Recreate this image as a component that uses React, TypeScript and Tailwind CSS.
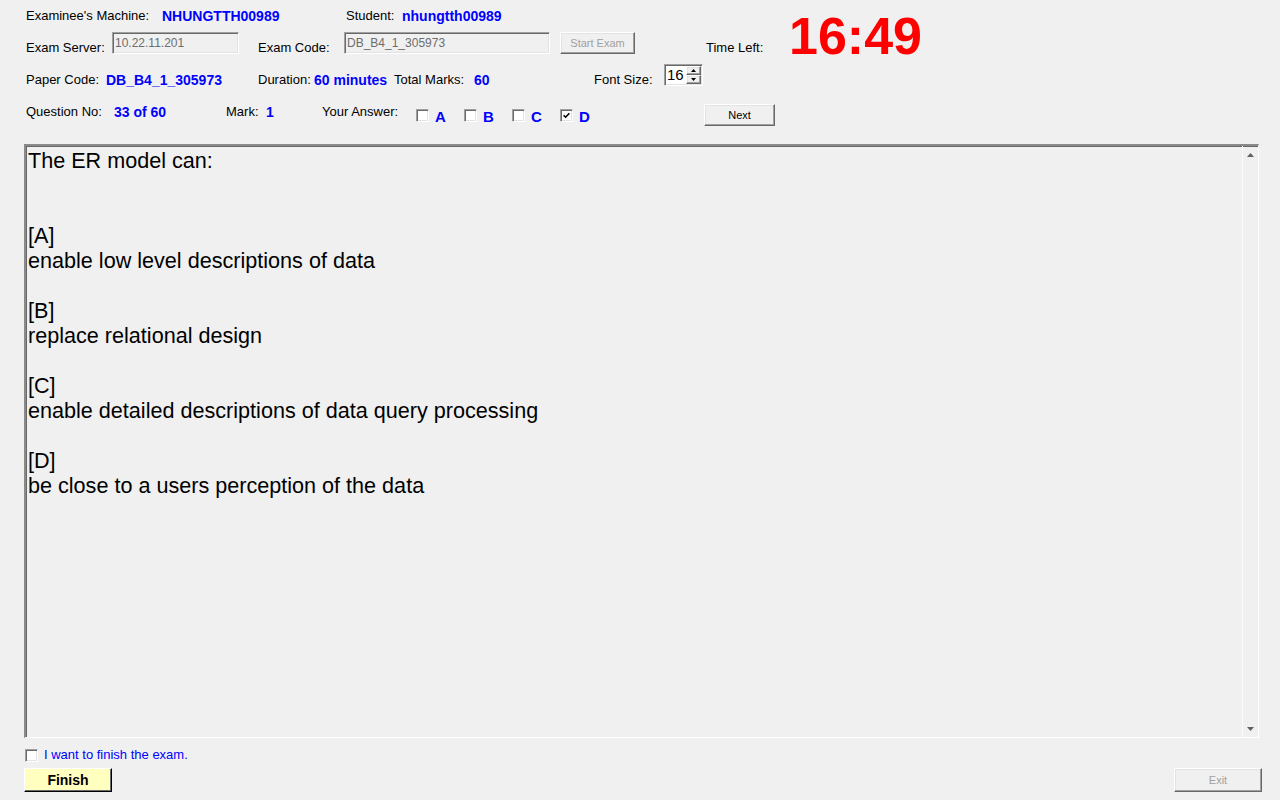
import React from "react";

const sunken =
  "border border-t-[#a0a0a0] border-l-[#a0a0a0] border-r-white border-b-white shadow-[inset_1px_1px_0_#696969,inset_-1px_-1px_0_#e3e3e3]";
const raised =
  "border border-t-white border-l-white border-r-[#696969] border-b-[#696969] shadow-[inset_-1px_-1px_0_#a0a0a0,inset_1px_1px_0_#e3e3e3]";

const questionText = `The ER model can:


[A]
enable low level descriptions of data

[B]
replace relational design

[C]
enable detailed descriptions of data query processing

[D]
be close to a users perception of the data`;

function CheckBox({ checked = false }: { checked?: boolean }) {
  return (
    <span className={`w-[13px] h-[13px] shrink-0 bg-white flex items-center justify-center ${sunken}`}>
      {checked && (
        <svg width="7" height="7" viewBox="0 0 7 7">
          <path d="M0.6 3.2 L2.6 5.2 L6.4 1.2" fill="none" stroke="#000" strokeWidth="1.6" />
        </svg>
      )}
    </span>
  );
}

function Arrow({ up }: { up?: boolean }) {
  return (
    <svg width="7" height="4" viewBox="0 0 7 4">
      <path d={up ? "M0 4 L3.5 0 L7 4 Z" : "M0 0 L7 0 L3.5 4 Z"} fill="#606060" />
    </svg>
  );
}

export default function App() {
  return (
    <div className="w-[1280px] h-[800px] bg-[#f0f0f0] flex flex-col overflow-hidden font-['Liberation_Sans',Arial,sans-serif] text-[13px] leading-[16px] text-black">
      {/* top rows + timer */}
      <div className="flex h-[56px] pl-[26px]">
        <div className="flex flex-col w-[763px]">
          <div className="flex h-[32px] pt-[8px]">
            <span className="w-[136px]">Examinee's Machine:</span>
            <span className="w-[184px] text-[14px] font-bold text-[#0000ff]">NHUNGTTH00989</span>
            <span className="w-[56px]">Student:</span>
            <span className="text-[14px] font-bold text-[#0000ff]">nhungtth00989</span>
          </div>
          <div className="flex h-[24px] items-start">
            <span className="w-[86px] mt-[8px]">Exam Server:</span>
            <div className={`w-[127px] h-[22px] pl-[2px] pt-[2px] text-[12px] text-[#6d6d6d] ${sunken}`}>10.22.11.201</div>
            <span className="w-[86px] ml-[19px] mt-[8px]">Exam Code:</span>
            <div className={`w-[206px] h-[22px] pl-[2px] pt-[2px] text-[12px] text-[#6d6d6d] ${sunken}`}>DB_B4_1_305973</div>
            <button className={`w-[75px] h-[22px] ml-[10px] text-[11px] text-[#a0a0a0] bg-[#f0f0f0] ${raised}`}>Start Exam</button>
            <span className="ml-[71px] mt-[8px]">Time Left:</span>
          </div>
        </div>
        <div className="mt-[10px] text-[52px] leading-none font-bold text-[#ff0000]">16:49</div>
      </div>

      {/* row 3 */}
      <div className="flex h-[40px] pl-[26px] items-start">
        <span className="w-[80px] mt-[16px]">Paper Code:</span>
        <span className="w-[152px] mt-[16px] text-[14px] font-bold text-[#0000ff]">DB_B4_1_305973</span>
        <span className="w-[56px] mt-[16px]">Duration:</span>
        <span className="w-[80px] mt-[16px] text-[14px] font-bold text-[#0000ff]">60 minutes</span>
        <span className="w-[80px] mt-[16px]">Total Marks:</span>
        <span className="w-[120px] mt-[16px] text-[14px] font-bold text-[#0000ff]">60</span>
        <span className="w-[70px] mt-[16px]">Font Size:</span>
        <div className={`mt-[8px] w-[39px] h-[22px] bg-white flex ${sunken}`}>
          <span className="flex-1 pl-[2px] pt-[2px] text-[15px] leading-[16px]">16</span>
          <div className="w-[16px] flex flex-col py-[1px] pr-[1px]">
            <div className={`flex-1 bg-[#f0f0f0] flex items-center justify-center ${raised}`}>
              <svg width="5" height="3" viewBox="0 0 5 3"><path d="M0 3 L2.5 0 L5 3 Z" fill="#000" /></svg>
            </div>
            <div className={`flex-1 bg-[#f0f0f0] flex items-center justify-center ${raised}`}>
              <svg width="5" height="3" viewBox="0 0 5 3"><path d="M0 0 L5 0 L2.5 3 Z" fill="#000" /></svg>
            </div>
          </div>
        </div>
      </div>

      {/* row 4 */}
      <div className="flex h-[40px] pl-[26px] items-start">
        <span className="w-[88px] mt-[8px]">Question No:</span>
        <span className="w-[112px] mt-[8px] text-[14px] font-bold text-[#0000ff]">33 of 60</span>
        <span className="w-[40px] mt-[8px]">Mark:</span>
        <span className="w-[56px] mt-[8px] text-[14px] font-bold text-[#0000ff]">1</span>
        <span className="w-[94px] mt-[8px]">Your Answer:</span>
        {["A", "B", "C", "D"].map((l) => (
          <div key={l} className="w-[48px] flex items-start">
            <span className="mt-[13px]">
              <CheckBox checked={l === "D"} />
            </span>
            <span className="ml-[6px] mt-[13px] text-[15px] leading-[16px] font-bold text-[#0000ff]">{l}</span>
          </div>
        ))}
        <button className={`ml-[96px] mt-[8px] w-[71px] h-[22px] text-[11px] bg-[#f0f0f0] ${raised}`}>Next</button>
      </div>

      {/* question area */}
      <div className="mt-[8px] ml-[24px] w-[1235px] h-[594px] flex border-t-2 border-l-2 border-t-[#8a8a8a] border-l-[#8a8a8a] border-b border-r border-b-white border-r-white shadow-[inset_1px_1px_0_#696969]">
        <div className="flex-1 pl-[2px] pt-[1.5px] text-[21.6px] leading-[25px] whitespace-pre-line">
          {questionText}
        </div>
        <div className="w-[16px] flex flex-col justify-between border-l border-l-[#fbfbfb]">
          <div className="h-[17px] flex items-center justify-center">
            <Arrow up />
          </div>
          <div className="h-[17px] flex items-center justify-center">
            <Arrow />
          </div>
        </div>
      </div>

      {/* finish checkbox */}
      <div className="mt-[9px] ml-[25px] flex items-center gap-[6px]">
        <CheckBox />
        <span className="text-[#0000ff]">I want to finish the exam.</span>
      </div>

      {/* bottom buttons */}
      <div className="mt-[5px] pl-[24px] pr-[18px] flex justify-between">
        <button className="w-[88px] h-[24px] bg-[#ffffc0] text-[14px] font-bold border border-t-white border-l-white border-r-black border-b-black shadow-[inset_-1px_-1px_0_#696969]">
          Finish
        </button>
        <button className={`w-[88px] h-[24px] bg-[#f0f0f0] text-[11px] text-[#a0a0a0] ${raised}`}>Exit</button>
      </div>
    </div>
  );
}
